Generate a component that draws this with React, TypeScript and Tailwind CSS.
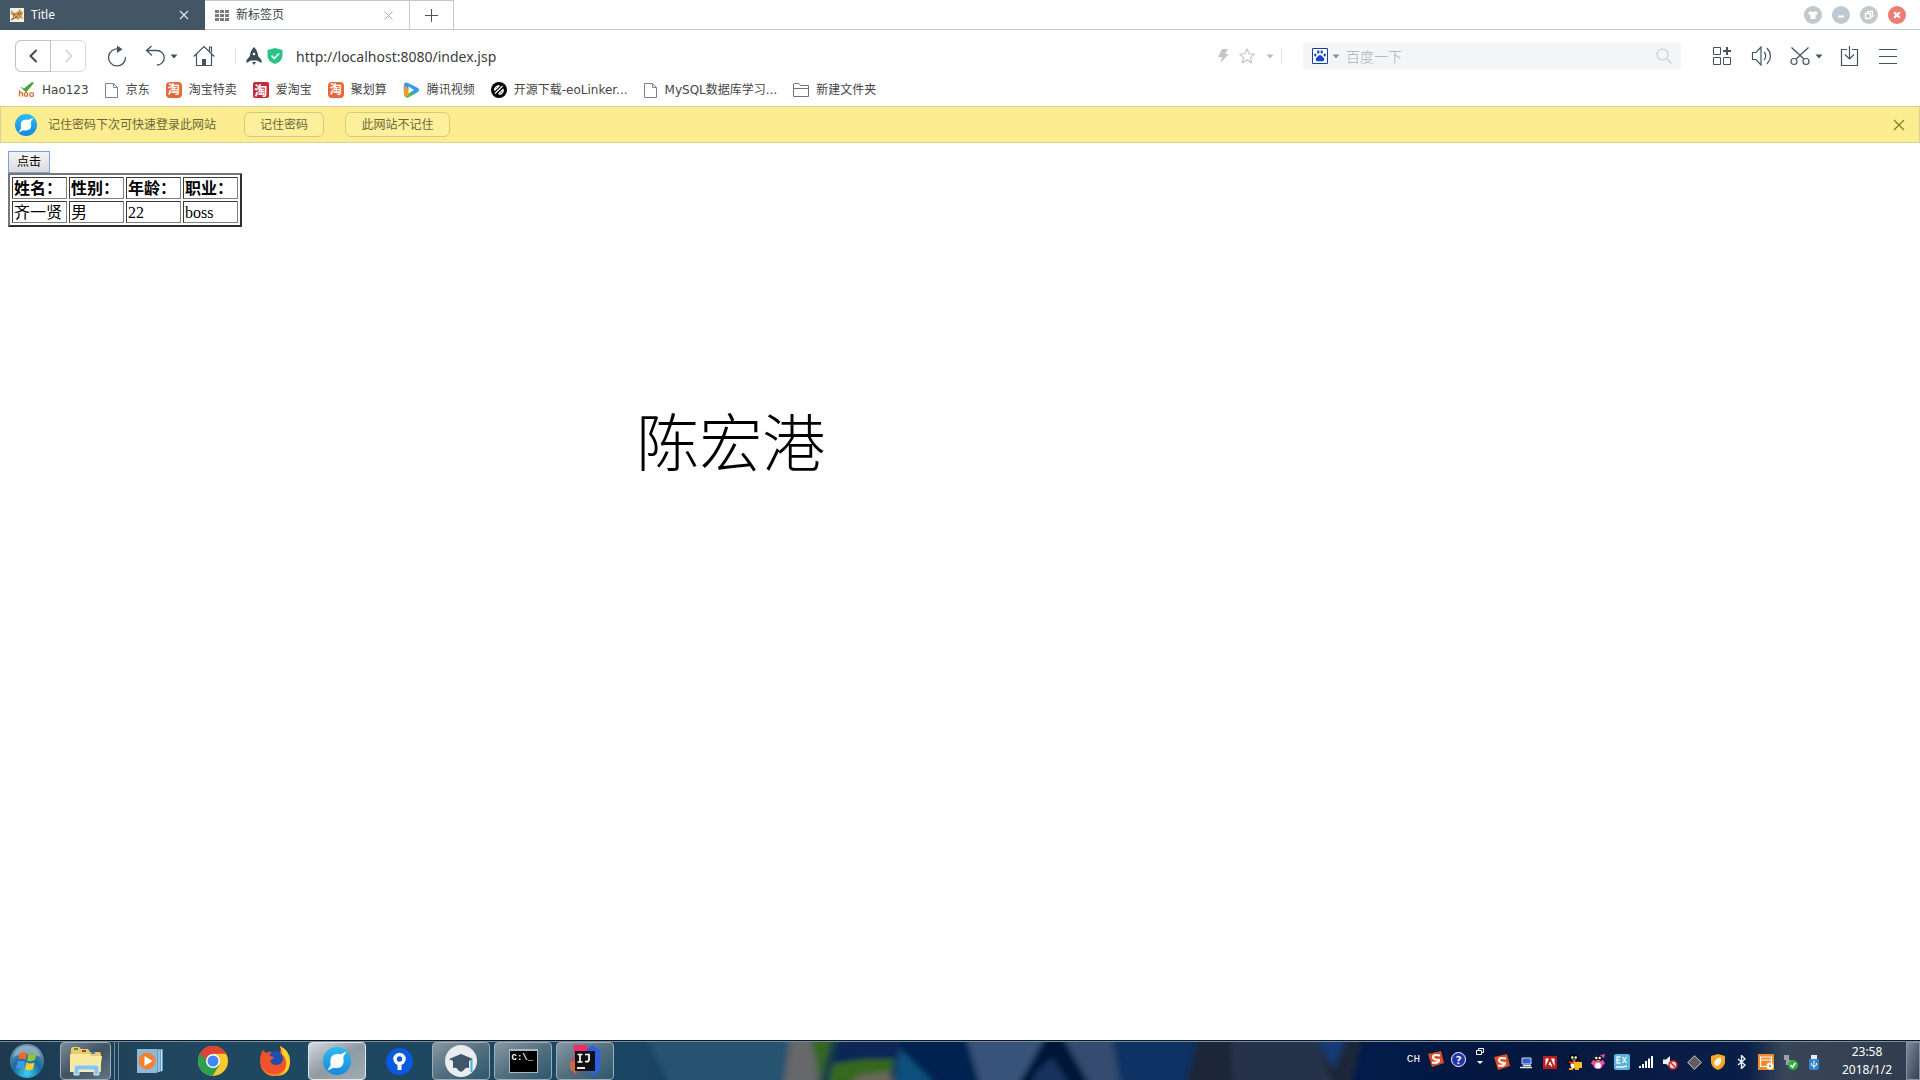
import type { ReactNode } from "react";

type DrawProps = { w: number; h: number; box?: string; className?: string; children: ReactNode };

function Draw({ w, h, box, className, children }: DrawProps) {
  return (
    <svg width={w} height={h} viewBox={box ?? `0 0 ${w} ${h}`} fill="none" className={`shrink-0 ${className ?? ""}`} aria-hidden="true">
      {children}
    </svg>
  );
}

function Caret({ className }: { className?: string }) {
  return (
    <Draw w={8} h={5} className={className}>
      <path d="M0.5 0.5h7L4 4.5z" fill="currentColor" />
    </Draw>
  );
}

function TaoIcon({ square = false }: { square?: boolean }) {
  return (
    <span
      className={
        square
          ? "flex size-4 shrink-0 items-center justify-center rounded-xs bg-[#c8283a] text-[13px] leading-none font-bold text-white"
          : "flex size-4 shrink-0 items-center justify-center rounded-sm bg-[#e5683a] text-[12px] leading-none font-bold text-white"
      }
      aria-hidden="true"
    >
      淘
    </span>
  );
}

function PageIcon() {
  return (
    <Draw w={14} h={15}>
      <path d="M1 .5h7.5l4 4v10H.5V.5zM8.500 .5v4h4" stroke="#7d8387" />
    </Draw>
  );
}

function Bird({ size, id }: { size: number; id: string }) {
  return (
    <Draw w={size} h={size} box="0 0 28 28">
      <defs>
        <linearGradient id={id} x1="0" y1="0" x2="0" y2="1">
          <stop offset="0" stopColor="#2dbdf3" />
          <stop offset="1" stopColor="#1489dc" />
        </linearGradient>
      </defs>
      <circle cx="14" cy="14" r="14" fill={`url(#${id})`} />
      <path d="M23.500 4.500L17.500 7.200Q10 6 8 10.500q-1.200 3.500-.3 7.500L4.500 23.500l6-2.700q7.500 1.200 9.500-3.300 1.200-3.500.3-7.500z" fill="#fff" />
    </Draw>
  );
}

const bookmarks: { label: string; icon: ReactNode }[] = [
  {
    label: "Hao123",
    icon: (
      <Draw w={17} h={16}>
        <path d="M2 4.500l4 2L14 0l2 1-8 9.500z" fill="#4aa53b" />
        <path d="M1.500 8v6.500M1.500 12q0-1.500 1.500-1.500t1.500 1.500v2.500M9.500 10.500v4M9.500 12.500a1.600 1.800 0 1 0-3.200 0 1.600 1.800 0 1 0 3.200 0M15.500 12.500a1.900 1.900 0 1 0-3.800 0 1.900 1.900 0 1 0 3.800 0" stroke="#e0703c" strokeWidth="1.300" />
      </Draw>
    ),
  },
  { label: "京东", icon: <PageIcon /> },
  { label: "淘宝特卖", icon: <TaoIcon /> },
  { label: "爱淘宝", icon: <TaoIcon square /> },
  { label: "聚划算", icon: <TaoIcon /> },
  {
    label: "腾讯视频",
    icon: (
      <Draw w={17} h={16}>
        <path d="M1 2Q2-.5 5 1l10 5q2 2 0 4L5 15.500q-2.500.5-3.500-2Q0 8 1 2z" fill="#2f9fe0" />
        <path d="M1.500 9Q5 12 12 11.500L5 15.500q-2.500.5-3.500-2z" fill="#66bd2e" />
        <path d="M1 3v9q1 3 4 2 3-6-4-11z" fill="#f39a2b" />
        <path d="M5.500 4.500v7l5.500-3.500z" fill="#fff" />
      </Draw>
    ),
  },
  {
    label: "开源下载-eoLinker...",
    icon: (
      <Draw w={16} h={16}>
        <circle cx="8" cy="8" r="8" fill="#050505" />
        <path d="M3.500 8.500L8.500 3.500M4 11.500L11.500 4M7.500 12L12.500 7M8 12.200q3 .5 4.500-4M3.500 8.500q0-4 4.500-5" stroke="#fff" strokeWidth="1.200" />
      </Draw>
    ),
  },
  { label: "MySQL数据库学习...", icon: <PageIcon /> },
  {
    label: "新建文件夹",
    icon: (
      <Draw w={16} h={14}>
        <path d="M.5 13.500V2q0-1.500 1.500-1.500h4l1.500 2h8v11zM.5 5.500h15" stroke="#6d7377" />
      </Draw>
    ),
  },
];

function TabBar() {
  return (
    <header className="flex h-[30px] border-b border-[#c3c8cb] bg-white text-[12px]">
      <div className="-mb-px flex w-[205px] items-center bg-[#435665] pr-4 pl-[10px] text-white">
        <Draw w={14} h={14}>
          <path d="M0 0h14v14H0z" fill="#f6f0e2" />
          <path d="M1 2l3 3 3-1 3-3 1 2 2 1-1 4 1 3-3-1-2 2-2-2-4 2 1-4-2-2z" fill="#c99a55" />
          <path d="M3 6l2 1M8 5l1 2M11 5l-1 1M5 10l2-1M1 12l3-2" stroke="#62452a" />
        </Draw>
        <span className="ml-[7px] grow">Title</span>
        <button aria-label="关闭 Title">
          <Draw w={10} h={10}>
            <path d="M1 1l8 8M9 1L1 9" stroke="#dfe5e8" strokeWidth="1.200" />
          </Draw>
        </button>
      </div>
      <div className="flex w-[205px] items-center border-t border-r border-[#c3c8cb] pr-4 pl-[10px] text-[#3b4246]">
        <Draw w={14} h={11}>
          <path d="M0 0h4v3H0zM5 0h4v3H5zM10 0h4v3h-4zM0 4h4v3H0zM5 4h4v3H5zM10 4h4v3h-4zM0 8h4v3H0zM5 8h4v3H5zM10 8h4v3h-4z" fill="#7b7b7b" />
        </Draw>
        <span className="ml-[7px] grow">新标签页</span>
        <button aria-label="关闭 新标签页">
          <Draw w={9} h={9}>
            <path d="M.5.5l8 8M8.500.5l-8 8" stroke="#a4aaad" />
          </Draw>
        </button>
      </div>
      <button aria-label="打开新标签页" className="flex w-11 items-center justify-center border-t border-r border-[#c3c8cb]">
        <Draw w={13} h={13}>
          <path d="M6.500 0v13M0 6.500h13" stroke="#4a565e" />
        </Draw>
      </button>
      <div className="ml-auto flex items-center gap-[10px] pr-[14px]">
        <button aria-label="皮肤">
          <Draw w={18} h={18}>
            <circle cx="9" cy="9" r="9" fill="#c3c8cc" />
            <path d="M6.500 5q2.500 2 5 0L14 7l-1.500 2-1-.5V13h-5V8.500l-1 .5L4 7z" fill="#fff" />
          </Draw>
        </button>
        <button aria-label="最小化">
          <Draw w={18} h={18}>
            <circle cx="9" cy="9" r="9" fill="#c0c9cf" />
            <path d="M6 10.500h6" stroke="#fff" strokeWidth="2" />
          </Draw>
        </button>
        <button aria-label="还原">
          <Draw w={18} h={18}>
            <circle cx="9" cy="9" r="9" fill="#c3c8cc" />
            <path d="M7.500 7V5.500h5v5H11M5.500 7.500h5v5h-5z" stroke="#fff" strokeWidth="1.400" />
          </Draw>
        </button>
        <button aria-label="关闭">
          <Draw w={18} h={18}>
            <circle cx="9" cy="9" r="9" fill="#ef7b75" />
            <path d="M6.200 6.200l5.600 5.600M11.800 6.200l-5.600 5.600" stroke="#fff" strokeWidth="2.200" />
          </Draw>
        </button>
      </div>
    </header>
  );
}

function Toolbar() {
  return (
    <div className="flex h-[52px] items-center pr-4 pl-[15px] text-[#43545f]">
      <div className="flex h-8 w-[71px] shrink-0 rounded-md border border-[#d5d9db]">
        <button aria-label="后退" className="-my-px -ml-px flex w-9 items-center justify-center rounded-l-md border border-[#bfc5c8]">
          <Draw w={9} h={14}>
            <path d="M7.500 1L1.500 7l6 6" stroke="#3d4a52" strokeWidth="2" />
          </Draw>
        </button>
        <button aria-label="前进" className="flex grow items-center justify-center">
          <Draw w={9} h={14}>
            <path d="M1.500 1l6 6-6 6" stroke="#cfd2d4" strokeWidth="1.600" />
          </Draw>
        </button>
      </div>
      <button aria-label="刷新" className="ml-[13px] flex w-9 shrink-0 justify-center">
        <Draw w={20} h={22}>
          <path d="M12 4.200A8.500 8.500 0 1 0 18.500 12" stroke="currentColor" strokeWidth="1.300" />
          <path d="M10 .5l5.500 3.700L10 8z" fill="currentColor" />
        </Draw>
      </button>
      <button aria-label="撤销" className="ml-[10px] flex w-[34px] shrink-0 items-center gap-[5px]">
        <Draw w={20} h={22}>
          <path d="M6.500 1L1.500 5.500l5.500 5M1.500 5.500H12a7.200 7.200 0 0 1 0 14.500" stroke="currentColor" strokeWidth="1.300" />
        </Draw>
        <Caret />
      </button>
      <button aria-label="主页" className="ml-[14px] flex shrink-0">
        <Draw w={22} h={22}>
          <path d="M.7 11.500L11 1.500l10.300 10M3.500 9.500v11h15v-11M16.500 6V2h2v5.500" stroke="currentColor" strokeWidth="1.200" />
          <path d="M9 14h4v6H9z" fill="currentColor" />
        </Draw>
      </button>
      <span className="ml-5 h-4 w-px shrink-0 bg-[#dfe2e4]" />
      <Draw w={16} h={18} className="ml-[10px]">
        <path d="M8 0q4 4 4 9l3.500 4v3L11 13.500H5L.5 16v-3L4 9q0-5 4-9z" fill="#3b4b57" />
        <circle cx="8" cy="7" r="1.300" fill="#fff" />
        <path d="M6 15h4l-2 3z" fill="#3b4b57" />
      </Draw>
      <Draw w={16} h={16} className="ml-[5px]">
        <path d="M8 0l7.500 2v6q0 5-7.500 8Q.5 13 .5 8V2z" fill="#27c486" />
        <path d="M4.500 7.500l2.800 3 4.700-5" stroke="#fff" strokeWidth="1.800" />
      </Draw>
      <input aria-label="地址" defaultValue="http://localhost:8080/index.jsp" className="ml-[13px] min-w-0 grow bg-transparent text-[14px] text-[#3c3c3c] outline-none" />
      <button aria-label="极速模式" className="flex shrink-0">
        <Draw w={11} h={14}>
          <path d="M4 0h6L7 5h4L2 14l2.500-6H0z" fill="#bfc4c8" />
        </Draw>
      </button>
      <button aria-label="收藏" className="ml-[10px] flex shrink-0">
        <Draw w={16} h={16}>
          <path d="M8 1l2.100 4.700 5.200.5-3.900 3.400 1.200 5L8 12l-4.600 2.600 1.200-5L.7 6.200l5.200-.5z" stroke="#bfc4c8" strokeWidth="1.100" />
        </Draw>
      </button>
      <button aria-label="更多收藏" className="ml-[11px] flex shrink-0 text-[#b9bec2]">
        <Caret />
      </button>
      <span className="ml-[7px] h-4 w-px shrink-0 bg-[#dfe2e4]" />
      <div className="ml-[21px] flex h-[26px] w-[378px] shrink-0 items-center rounded-xs bg-[#f4f5f6] pr-[9px] pl-[9px]">
        <button aria-label="搜索引擎" className="flex items-center gap-1 text-[#8c9092]">
          <Draw w={16} h={16}>
            <path d="M.5.5h15v15H.5z" fill="#fff" stroke="#1d3da8" />
            <path d="M8 7q1.500 0 2.500 1.800 2 1.200 1.800 3-.5 1.700-2.500 1.500-1.800-.3-3.600 0-2.200.2-2.500-1.500-.1-1.800 1.800-3Q6.500 7 8 7z" fill="#1c45c8" />
            <ellipse cx="3.300" cy="7" rx="1.200" ry="1.600" fill="#1c45c8" />
            <ellipse cx="6.300" cy="4" rx="1.200" ry="1.700" fill="#1c45c8" />
            <ellipse cx="9.700" cy="4" rx="1.200" ry="1.700" fill="#1c45c8" />
            <ellipse cx="12.700" cy="7" rx="1.200" ry="1.600" fill="#1c45c8" />
          </Draw>
          <Caret />
        </button>
        <input aria-label="搜索" placeholder="百度一下" className="ml-[6px] min-w-0 grow bg-transparent text-[14px] font-light outline-none placeholder:text-[#a9adb0]" />
        <button aria-label="开始搜索" className="flex">
          <Draw w={16} h={16}>
            <circle cx="6.500" cy="6.500" r="5.500" stroke="#c9cccf" strokeWidth="1.200" />
            <path d="M10.500 10.500l5 5" stroke="#c9cccf" strokeWidth="1.200" />
          </Draw>
        </button>
      </div>
      <button aria-label="扩展" className="ml-[31px] flex shrink-0">
        <Draw w={20} h={20}>
          <path d="M1.500 1.500h7v7h-7zM1.500 11.500h7v7h-7zM11.500 11.500h7v7h-7z" stroke="currentColor" />
          <path d="M15 1v8M11 5h8" stroke="currentColor" strokeWidth="2" />
        </Draw>
      </button>
      <button aria-label="声音" className="ml-[19px] flex shrink-0">
        <Draw w={22} h={20}>
          <path d="M1.500 6.500h3.500l5-5.500v18l-5-5.500H1.500zM13 6q3.500 4 0 8M16 2q7 8 0 16" stroke="currentColor" strokeWidth="1.200" />
        </Draw>
      </button>
      <button aria-label="截图" className="ml-[17px] flex shrink-0 items-center gap-[5px]">
        <Draw w={20} h={20}>
          <path d="M1.500 1.500L14 13M18.500 1.500L6 13" stroke="currentColor" strokeWidth="1.300" />
          <circle cx="4" cy="15.500" r="3" stroke="currentColor" strokeWidth="1.200" />
          <circle cx="16" cy="15.500" r="3" stroke="currentColor" strokeWidth="1.200" />
        </Draw>
        <Caret />
      </button>
      <button aria-label="下载" className="ml-[17px] flex shrink-0">
        <Draw w={20} h={22}>
          <path d="M7 4.500H1.500v16h16v-16H12M9.500 1v13M5 9.500l4.500 4.500L14 9.500" stroke="currentColor" strokeWidth="1.200" />
        </Draw>
      </button>
      <button aria-label="菜单" className="ml-[19px] mr-[7px] flex shrink-0">
        <Draw w={18} h={16}>
          <path d="M0 1.500h18M0 8.500h18M0 15.500h18" stroke="currentColor" />
        </Draw>
      </button>
    </div>
  );
}

function BookmarkBar() {
  return (
    <nav
      aria-label="书签"
      className="flex h-6 items-start gap-4 pl-[18px] font-['DejaVu_Sans','Noto_Sans_CJK_SC',sans-serif] text-[12px] leading-4 text-[#454545]"
    >
      {bookmarks.map((b) => (
        <a key={b.label} href="#" className="flex items-center gap-[7px] whitespace-nowrap">
          {b.icon}
          {b.label}
        </a>
      ))}
    </nav>
  );
}

function PasswordBar() {
  return (
    <div className="flex h-[37px] items-center border border-[#d6d29a] bg-[#fbed90] pr-[14px] pl-[14px] text-[12px] text-[#6b6638]">
      <Bird size={22} id="bird-small" />
      <p className="ml-[11px]">记住密码下次可快速登录此网站</p>
      <button className="ml-7 h-[25px] w-20 rounded-md border border-[#d8c878] bg-[#fdf09c]">记住密码</button>
      <button className="ml-[21px] h-[25px] w-[105px] rounded-md border border-[#d8c878] bg-[#fdf09c]">此网站不记住</button>
      <button aria-label="关闭提示" className="ml-auto">
        <Draw w={12} h={12}>
          <path d="M1 1l10 10M11 1L1 11" stroke="#8a7d25" strokeWidth="1.300" />
        </Draw>
      </button>
    </div>
  );
}

function PageContent() {
  const cell = "h-[22px] w-[55px] border border-t-[#3a3a3a] border-r-[#808080] border-b-[#808080] border-l-[#3a3a3a] px-px pt-[2px] pb-0 text-left whitespace-nowrap";
  return (
    <main className="grow px-2 pt-2 text-black">
      <button className="block h-[22px] w-[42px] border border-[#7f9fdc] bg-linear-to-b from-[#f4f4f4] to-[#dcdcdc] text-[12px] leading-5">点击</button>
      <table className="border-separate border-spacing-[2px] border-2 border-t-[#777] border-r-[#2e2e2e] border-b-[#2e2e2e] border-l-[#777] font-['Liberation_Serif','Noto_Sans_CJK_SC',serif] text-[16px] leading-[18px]">
        <thead>
          <tr>
            {["姓名：", "性别：", "年龄：", "职业："].map((h) => (
              <th key={h} scope="col" className={`${cell} font-bold`}>
                {h}
              </th>
            ))}
          </tr>
        </thead>
        <tbody>
          <tr>
            {["齐一贤", "男", "22", "boss"].map((v) => (
              <td key={v} className={cell}>
                {v}
              </td>
            ))}
          </tr>
        </tbody>
      </table>
      <p className="mt-[170px] ml-[33%] text-[63px] leading-[90px] font-light">陈宏港</p>
    </main>
  );
}

function Wallpaper() {
  return (
    <svg viewBox="0 0 1920 40" preserveAspectRatio="none" className="absolute inset-0 h-full w-full" aria-hidden="true">
      <defs>
        <filter id="soft" x="0" y="-20%" width="100%" height="140%">
          <feGaussianBlur stdDeviation="3" />
        </filter>
        <linearGradient id="base" x1="0" y1="0" x2="1" y2="0">
          <stop offset="0" stopColor="#1d3a50" />
          <stop offset="0.100" stopColor="#20475f" />
          <stop offset="0.300" stopColor="#1c4864" />
          <stop offset="0.700" stopColor="#021c4c" />
          <stop offset="0.780" stopColor="#03173f" />
          <stop offset="0.910" stopColor="#0a1f47" />
          <stop offset="0.930" stopColor="#3a4658" />
          <stop offset="1" stopColor="#303c4d" />
        </linearGradient>
      </defs>
      <path d="M0 0h1920v40H0z" fill="url(#base)" />
      <g filter="url(#soft)">
        <path d="M645-5h145v50h-120z" fill="#25536f" />
        <path d="M790-5h22l8 50h-36z" fill="#66686a" />
        <path d="M810-5h90l-10 42-68 10z" fill="#35671f" />
        <path d="M832-5h70l-3 24h-35l-34 5z" fill="#0c2854" />
        <path d="M832-5l-12 50h8l12-50z" fill="#183b4a" />
        <path d="M858 35l32-4 4 14h-44z" fill="#6a6658" />
        <path d="M900 8l38 40h-44z" fill="#07507c" />
        <path d="M903-5h65l12 50h-42l-38-38z" fill="#042150" />
        <path d="M966-5h80l-28 50h-38z" fill="#38527a" />
        <path d="M1046-5h16l28 50h-72z" fill="#041638" />
        <path d="M1036 32l16-15 20 30h-42z" fill="#12315d" />
        <path d="M1062-5h50l8 50h-30z" fill="#344b70" />
        <path d="M1112-5h86l-12 50h-66z" fill="#0c3263" />
        <path d="M1198-5h165l-12 50h-165z" fill="#1a2638" />
        <path d="M1230-5h85l18 50h-100z" fill="#28334a" />
        <path d="M1314-5h33l-13 34z" fill="#173a74" />
      </g>
    </svg>
  );
}

const taskButton = "flex h-[38px] w-[58px] shrink-0 items-center justify-center rounded-sm border border-[#9aacb8] bg-linear-to-br from-[#8997a2] via-[#53707f] to-[#2b586e]";

function SogouIcon() {
  return (
    <Draw w={16} h={16}>
      <path d="M0 3l13-3 3 12-12 4z" fill="#dd4e24" />
      <path d="M12 4.500Q5 3 5 6t6 3q0 3.500-7 2.500" stroke="#fff" strokeWidth="2.200" />
    </Draw>
  );
}

function Penguin({ body, scarf }: { body: string; scarf: string }) {
  return (
    <Draw w={16} h={16}>
      <path d="M8 0q5 0 5 5.500l2.500 4-1.500 1.500-1-1q0 5-5 5t-5-5l-1.500 1-1-1.500L3 5.500Q3 0 8 0z" fill={body} />
      <ellipse cx="8" cy="11" rx="3.500" ry="3.500" fill="#fff" />
      <circle cx="6.300" cy="3.500" r="1.200" fill="#fff" />
      <circle cx="9.700" cy="3.500" r="1.200" fill="#fff" />
      <path d="M3 7q5 2.500 10 0v2q-5 2-10 0z" fill={scarf} />
      <path d="M5.500 5.500h5L8 7zM3 14h4v2H3zM9 14h4v2H9z" fill="#f4a51c" />
    </Draw>
  );
}

const trayIcons: { name: string; icon: ReactNode }[] = [
  { name: "搜狗输入法", icon: <SogouIcon /> },
  {
    name: "网络",
    icon: (
      <Draw w={14} h={14}>
        <path d="M4 0h6v3H4z" fill="#111b2e" />
        <path d="M3 3h9v6H3z" fill="#2b62d8" stroke="#cdd7ea" />
        <path d="M1 12.500h12M4 10.500h8" stroke="#dfe5ef" strokeWidth="1.500" />
      </Draw>
    ),
  },
  {
    name: "Adobe",
    icon: (
      <Draw w={14} h={13}>
        <path d="M0 0h14v13H0z" fill="#b81f1c" />
        <path d="M2.500 2.500h3.500L2.500 10.500zM11.500 2.500H8l3.500 8zM7 5l2.500 5.500H8L7.300 9H5.500z" fill="#fff" />
      </Draw>
    ),
  },
  {
    name: "QQ",
    icon: (
      <span className="flex">
        <Penguin body="#0a0a0a" scarf="#e43a2a" />
        <Draw w={8} h={8} className="-ml-2 self-end">
          <path d="M0 0h8v6H4L2 8V6H0z" fill="#f5b82c" />
        </Draw>
      </span>
    ),
  },
  {
    name: "QQ 好友",
    icon: (
      <Draw w={16} h={16}>
        <path d="M8 1q5 0 5 5l2 3.500-1.500 1.500-.5-1q0 5-5 5t-5-5l-.5 1L1 9.500 3 6q0-5 5-5z" fill="#f04ca8" />
        <path d="M3 6q0-5 5-5t5 5q-5 2.500-10 0z" fill="#17101c" />
        <path d="M10 1l5-1-1 4z" fill="#f04ca8" />
        <circle cx="6.300" cy="4" r="1.200" fill="#fff" />
        <circle cx="9.700" cy="4" r="1.200" fill="#fff" />
        <ellipse cx="8" cy="11.500" rx="3" ry="3" fill="#fff" />
        <path d="M5.500 6h5L8 7.500z" fill="#f4a51c" />
      </Draw>
    ),
  },
  {
    name: "EX",
    icon: (
      <Draw w={16} h={16}>
        <path d="M0 2q0-2 2-2h12q2 0 2 2v12q0 2-2 2H2q-2 0-2-2z" fill="#5cb3d8" />
        <path d="M6.500 3H3v6h3.500M3 6h3M8.500 3l4 6M12.500 3l-4 6M2 13h7l4-1" stroke="#eaf8ff" strokeWidth="1.300" />
      </Draw>
    ),
  },
  {
    name: "信号",
    icon: (
      <Draw w={14} h={12}>
        <path d="M0 10h2v2H0zM3 8h2v4H3zM6 5h2v7H6zM9 2.500h2V12H9zM12 0h2v12h-2z" fill="#fff" />
      </Draw>
    ),
  },
  {
    name: "静音",
    icon: (
      <Draw w={15} h={15}>
        <path d="M0 4.500h3L7 1v11L3 9H0z" fill="#f1f1f1" />
        <circle cx="10" cy="10" r="4" fill="#f6e4e4" stroke="#d3252c" strokeWidth="1.600" />
        <path d="M7.200 7.200l5.600 5.600" stroke="#d3252c" strokeWidth="1.600" />
      </Draw>
    ),
  },
  {
    name: "图形",
    icon: (
      <Draw w={15} h={15}>
        <path d="M7.500.7l6.800 6.800-6.800 6.800L.7 7.500z" fill="#5e5e60" stroke="#c9cacc" />
      </Draw>
    ),
  },
  {
    name: "安全",
    icon: (
      <Draw w={14} h={16}>
        <path d="M7 0l7 2v6q0 5-7 8Q0 13 0 8V2z" fill="#f8a62a" />
        <path d="M3 10Q3 5 10 3q1 4-1 7t-4 2z" fill="#fff4d8" />
      </Draw>
    ),
  },
  {
    name: "蓝牙",
    icon: (
      <Draw w={10} h={14}>
        <path d="M1 4l7 6-3.500 3.500v-13L8 4l-7 6" stroke="#eaf3ff" strokeWidth="1.400" />
      </Draw>
    ),
  },
  {
    name: "日程",
    icon: (
      <Draw w={16} h={16}>
        <path d="M0 0h16v16H0z" fill="#ee8b2d" />
        <path d="M2.500 3h11v9.500h-11zM2.500 6h11" stroke="#fff" strokeWidth="1.200" />
        <circle cx="12" cy="12" r="3.500" fill="#fff" />
        <circle cx="12" cy="12" r="1.200" fill="#ee8b2d" />
      </Draw>
    ),
  },
  {
    name: "状态",
    icon: (
      <Draw w={15} h={16}>
        <path d="M1 1h5v5H1zM3 6h5v5H3z" fill="#9aa4a8" />
        <circle cx="10" cy="11" r="5" fill="#37ad3f" />
        <path d="M7.500 11l2 2 3-4" stroke="#fff" strokeWidth="1.500" />
      </Draw>
    ),
  },
  {
    name: "USB",
    icon: (
      <Draw w={10} h={15}>
        <path d="M2 0h6v4H2z" fill="#e8eef4" />
        <path d="M0 4h10v9q0 2-2 2H2q-2 0-2-2z" fill="#2f86cf" />
        <path d="M5 5.500v8M2.500 8v2L5 11.500 7.500 10V8" stroke="#fff" />
      </Draw>
    ),
  },
];

function Taskbar() {
  return (
    <footer className="relative h-10 border-t border-[#0a1a26] text-white">
      <Wallpaper />
      <div className="relative flex h-full items-center border-t border-[#7b8ea0]">
        <button aria-label="开始" className="ml-2 shrink-0">
          <Draw w={38} h={38}>
            <defs>
              <radialGradient id="orb" cx=".5" cy=".85" r=".8">
                <stop offset="0" stopColor="#3fd0f4" />
                <stop offset=".5" stopColor="#1a6a9e" />
                <stop offset="1" stopColor="#6f98ae" />
              </radialGradient>
            </defs>
            <circle cx="19" cy="19" r="17.500" fill="url(#orb)" stroke="#15384e" />
            <path d="M5 15Q8 4 19 4t14 11q-14-6-28 0z" fill="#b6c8d2" opacity=".55" />
            <path d="M12 11q3-2 7 0l-1.500 7q-4-2-7.500-.5z" fill="#ee6a2c" />
            <path d="M20.500 11.500q4 2 8-.5l-1.500 7q-4 2-8 .5z" fill="#8cc63e" />
            <path d="M9.500 19.500q4-1.500 7.500.5l-1.500 7q-4-2-7.500-.5z" fill="#3f9be2" />
            <path d="M18.500 20.500q4 2 8 0l-1.500 6.500q-4 2.500-8 .5z" fill="#fbc931" />
          </Draw>
        </button>
        <button aria-label="资源管理器" className="ml-[14px] flex h-[38px] w-[51px] shrink-0 items-center justify-center rounded-sm border border-[#9aacb8] bg-linear-to-br from-[#7b8b97] via-[#42525e] to-[#5f7684]">
          <Draw w={34} h={30}>
            <path d="M2 3q0-2 2-2h6l2 2h7l2 3h9q2 0 2 2v18H1z" fill="#e7cb70" />
            <path d="M5 2h4v2H5z" fill="#3d9a3d" />
            <path d="M13 4h4v2h-4z" fill="#b13c2c" />
            <path d="M22 6h4v2h-4z" fill="#3b86c6" />
            <path d="M1 8h19l2 2h11l-2 16H1z" fill="#f8e9a0" />
            <path d="M5 29v-7q0-3 3-3h19q3 0 3 3v7h-5v-5H10v5z" fill="#8cc4e6" stroke="#d9eef9" />
          </Draw>
        </button>
        <span className="ml-[2px] h-[38px] w-[2px] shrink-0 border-r border-[#6f8a99]" />
        <span className="ml-[2px] h-[38px] w-[2px] shrink-0 border-r border-[#6f8a99]" />
        <button aria-label="媒体播放器" className="ml-[18px] shrink-0">
          <Draw w={27} h={26}>
            <path d="M18 1h8v22l-8 2z" fill="#5f9dca" />
            <path d="M22 2v22M24.500 2v21" stroke="#cfe6f5" />
            <path d="M0 1h20v24H0z" fill="#8fb9d6" />
            <circle cx="10" cy="13" r="8.500" fill="#f08232" />
            <path d="M7.500 8v10l8-5z" fill="#fff" />
          </Draw>
        </button>
        <button aria-label="Chrome" className="ml-[34px] shrink-0">
          <Draw w={30} h={30}>
            <circle cx="15" cy="15" r="15" fill="#fbc92d" />
            <path d="M15 15L2 7.500A15 15 0 0 1 28 7.500H15z" fill="#dc4437" />
            <path d="M2 7.500A15 15 0 0 0 14.500 30L21.500 18.750 15 15z" fill="#2da04f" />
            <path d="M2 7.500L8.500 18.750 15 9z" fill="#2da04f" />
            <path d="M2 7.500Q7 0 15 0t13 7.500H15Q9 8 8.200 14z" fill="#dc4437" />
            <circle cx="15" cy="15" r="7" fill="#fff" />
            <circle cx="15" cy="15" r="5.500" fill="#4285f4" />
          </Draw>
        </button>
        <button aria-label="Firefox" className="ml-8 shrink-0">
          <Draw w={30} h={30}>
            <circle cx="15" cy="16" r="11" fill="#1d4fae" />
            <path d="M3 4l3 3q3-2 6-1-3 2-2 4l4 1q-1 3-4 3.500 2 5 7 4.500 6-1 6-7-1-4-3-5 1-4 0-7 9 5 10 14 0 15-15 16Q1 29 0 16 0 8 3 4z" fill="#f0532b" />
            <path d="M20 0q10 5 10 15 0 14-13 15 8-3 9-10t-4-12q0-4-2-8z" fill="#fdcf2c" />
            <path d="M1 19q4 10 14 9 9-1 11-8-1 9-11 10T1 19z" fill="#f7892c" />
          </Draw>
        </button>
        <button aria-label="浏览器" className="ml-[18px] flex h-[38px] w-[58px] shrink-0 items-center justify-center rounded-sm border border-[#e2e6e9] bg-linear-to-br from-[#d6d9dc] via-[#8f9aa3] to-[#a2abb4]">
          <Bird size={28} id="bird-large" />
        </button>
        <button aria-label="地图" className="ml-5 shrink-0">
          <Draw w={27} h={27}>
            <circle cx="13.500" cy="13.500" r="13.500" fill="#0b59de" />
            <circle cx="13.500" cy="11" r="4.500" stroke="#fff" strokeWidth="3.500" />
            <path d="M11.500 16h4v6h-4z" fill="#fff" />
            <circle cx="14" cy="11.500" r="1.800" fill="#0b59de" />
          </Draw>
        </button>
        <button aria-label="学习" className={`${taskButton} ml-[19px]`}>
          <Draw w={32} h={32}>
            <circle cx="16" cy="16" r="16" fill="#e9edf0" />
            <path d="M4 14l12-5 12 5-4 2v7q-4-1-5 2l-3 2-3-2q-1-3-5-2v-7z" fill="#40566a" />
            <path d="M26.500 15v12" stroke="#42b7dd" strokeWidth="2" />
          </Draw>
        </button>
        <button aria-label="命令提示符" className={`${taskButton} ml-1`}>
          <span className="flex h-6 w-[29px] flex-col border border-t-2 border-[#aeb6bb] bg-black pl-[2px] text-left font-['Liberation_Mono',monospace] text-[9px] leading-[14px] font-bold">C:\_</span>
        </button>
        <button aria-label="IntelliJ IDEA" className={`${taskButton} ml-1`}>
          <Draw w={32} h={32}>
            <path d="M4 0h13l6 7L6 30 1 17l5-5z" fill="#ed2f66" />
            <path d="M18 4l5-4 8 5v20l-7 6-8-8z" fill="#2c5fe0" />
            <path d="M1 17l6-2v14l-6-5z" fill="#c96a42" />
            <path d="M6 6h20v20H6z" fill="#111" />
            <path d="M8.500 9.500h5M8.500 17h5M11 9.500V17M16 9.500h5M20 9.500V15q0 2-4 1.500" stroke="#fff" strokeWidth="1.700" />
            <path d="M8 23h8" stroke="#fff" strokeWidth="1.800" />
          </Draw>
        </button>
        <div className="ml-auto flex h-full items-center">
          <span className="-mt-1 font-['Liberation_Mono',monospace] text-[11px]">CH</span>
          <button aria-label="输入法" className="-mt-1 ml-1 flex w-[23px] justify-center">
            <SogouIcon />
          </button>
          <button aria-label="帮助" className="-mt-1 flex w-[23px] justify-center">
            <span className="flex size-[15px] items-center justify-center rounded-full border border-white bg-[#2434a8] text-[11px] leading-none font-bold">?</span>
          </button>
          <span className="flex w-5 flex-col items-center gap-[6px] self-start pt-[6px]">
            <Draw w={8} h={7}>
              <path d="M2.500 2V.5h5v4H6M.5 2.500h5v4h-5z" stroke="#fff" />
            </Draw>
            <Draw w={6} h={3}>
              <path d="M0 0h6L3 3z" fill="#fff" />
            </Draw>
          </span>
          {trayIcons.map((t) => (
            <button key={t.name} aria-label={t.name} className="mt-[2px] flex w-6 justify-center">
              {t.icon}
            </button>
          ))}
          <time dateTime="2018-01-02T23:58" className="mr-[10px] ml-3 w-[58px] text-center text-[12px] leading-[18px]">
            23:58
            <br />
            2018/1/2
          </time>
          <button aria-label="显示桌面" className="h-full w-[14px] border border-[#8693a1] bg-linear-to-br from-[#7d8997] to-[#364252]" />
        </div>
      </div>
    </footer>
  );
}

export default function App() {
  return (
    <div className="flex min-h-screen flex-col bg-white font-['Noto_Sans','Noto_Sans_CJK_SC',sans-serif]">
      <TabBar />
      <Toolbar />
      <BookmarkBar />
      <PasswordBar />
      <PageContent />
      <Taskbar />
    </div>
  );
}
